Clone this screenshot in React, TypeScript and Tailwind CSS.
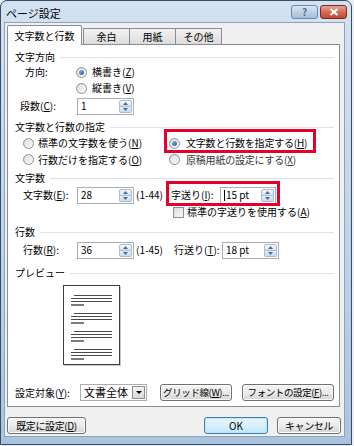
import React from 'react';

function Acc({ k }: { k: string }) {
  return (
    <span>
      (<u>{k}</u>)
    </span>
  );
}

function Radio({ on }: { on?: boolean }) {
  return (
    <span className="w-[11px] h-[11px] shrink-0 rounded-full border border-[#8e8f8f] bg-gradient-to-br from-[#dcdcdc] to-[#fbfbfb] flex items-center justify-center">
      {on && <span className="w-[5px] h-[5px] rounded-full bg-gradient-to-br from-[#7fb6ea] to-[#1f5ea8]" />}
    </span>
  );
}

function Arrow({ up }: { up?: boolean }) {
  return (
    <svg width="5" height="3" viewBox="0 0 5 3">
      <polygon points={up ? '0,3 5,3 2.5,0' : '0,0 5,0 2.5,3'} fill="#4a6a92" />
    </svg>
  );
}

function Spin({ v, className, cursor }: { v: string; className: string; cursor?: boolean }) {
  return (
    <div className={`h-[17px] border border-[#abadb3] bg-white flex ${className}`}>
      <div className="flex-1 flex items-center pl-[3px] text-[10px]">
        {cursor && <span className="w-px h-[11px] bg-black mr-px" />}
        {v}
      </div>
      <div className="w-[13px] flex flex-col m-px">
        <div className="flex-1 border border-[#a8bbd3] rounded-t-[2px] bg-gradient-to-b from-[#f4f8fc] to-[#d6e4f3] flex items-center justify-center">
          <Arrow up />
        </div>
        <div className="flex-1 border border-t-0 border-[#a8bbd3] rounded-b-[2px] bg-gradient-to-b from-[#e6eef8] to-[#c9dbef] flex items-center justify-center">
          <Arrow />
        </div>
      </div>
    </div>
  );
}

function Btn({ children, className }: { children: React.ReactNode; className: string }) {
  return (
    <div
      className={`h-[17px] rounded-[3px] border border-[#707070] bg-gradient-to-b from-[#f4f4f4] via-[#ebebeb] to-[#d5d5d5] flex items-center justify-center whitespace-nowrap tracking-[-0.4px] shadow-[inset_0_0_0_1px_#fcfcfc] ${className}`}
    >
      {children}
    </div>
  );
}

function Header({ title, className }: { title: string; className: string }) {
  return (
    <div className={`h-[14px] flex items-center pl-[7px] pr-[5px] ${className}`}>
      <span>{title}</span>
      <span className="flex-1 h-px bg-[#dce3ea] ml-[5px]" />
    </div>
  );
}

function Group() {
  return (
    <div className="flex flex-col gap-[2px]">
      <span className="ml-[3px] w-[38px] h-px bg-[#4a4a4a]" />
      <span className="w-[41px] h-px bg-[#4a4a4a]" />
      <span className="w-[41px] h-px bg-[#4a4a4a]" />
      <span className="w-[13px] h-[2px] bg-[#7c7c7c]" />
    </div>
  );
}

export default function App() {
  return (
    <div className="w-[354px] h-[446px] bg-[#e9eef4] font-['Noto_Sans_CJK_JP','Noto_Sans',sans-serif] text-[10px] leading-none text-black whitespace-nowrap">
      <div className="w-[352px] h-[445px] rounded-t-[7px] border border-[#3b4d63] bg-gradient-to-b from-[#d3e2f1] via-[#c0d5eb] to-[#aac4e0] flex flex-col">
        {/* title bar */}
        <div className="h-[21px] flex items-center pl-[5px] pr-[4px]">
          <span className="text-[11px] pt-[3px]">ページ設定</span>
          <div className="flex-1" />
          <div className="w-[27px] h-[14px] rounded-[3px] border border-[#6e88a8] bg-gradient-to-b from-[#dbe6f2] via-[#bcd0e6] to-[#a6bfdb] flex items-center justify-center text-[10px] font-bold text-[#5a6f8a]">
            ?
          </div>
          <div className="w-[27px] h-[14px] ml-[2px] rounded-[3px] border border-[#7a2a22] bg-gradient-to-b from-[#e8a593] via-[#d46a57] to-[#c4473a] flex items-center justify-center">
            <svg width="10" height="8" viewBox="0 0 10 8">
              <path d="M1.5 1 L8.5 7 M8.5 1 L1.5 7" stroke="#fff" strokeWidth="2.2" />
            </svg>
          </div>
        </div>

        {/* client area */}
        <div className="ml-[3px] w-[341px] h-[415px] bg-[#f0f0f0] border border-[#8da3bd] flex flex-col">
          {/* tabs */}
          <div className="h-[21px] flex items-end pl-[2px]">
            <div className="relative z-10 w-[75px] h-[20px] bg-white border border-b-0 border-[#898c95] rounded-t-[2px] flex items-center justify-center -mb-px">
              文字数と行数
            </div>
            <div className="w-[47px] h-[16px] ml-px border border-b-0 border-[#898c95] bg-gradient-to-b from-[#f3f3f3] to-[#dcdcdc] flex items-center justify-center">
              余白
            </div>
            <div className="w-[47px] h-[16px] -ml-px border border-b-0 border-[#898c95] bg-gradient-to-b from-[#f3f3f3] to-[#dcdcdc] flex items-center justify-center">
              用紙
            </div>
            <div className="w-[47px] h-[16px] -ml-px border border-b-0 border-[#898c95] bg-gradient-to-b from-[#f3f3f3] to-[#dcdcdc] flex items-center justify-center">
              その他
            </div>
          </div>

          {/* tab panel */}
          <div className="relative ml-[2px] w-[333px] h-[363px] bg-white border border-[#898c95] flex flex-col">
            <Header title="文字方向" className="mt-[5px]" />
            <div className="h-[16px] flex items-center">
              <span className="ml-[17px] w-[51px]">方向:</span>
              <Radio on />
              <span className="ml-[5px]">
                横書き<Acc k="Z" />
              </span>
            </div>
            <div className="h-[16px] flex items-center pl-[68px]">
              <Radio />
              <span className="ml-[5px]">
                縦書き<Acc k="V" />
              </span>
            </div>
            <div className="h-[18px] mt-px flex items-center">
              <span className="ml-[12px] w-[57px]">
                段数<Acc k="C" />:
              </span>
              <Spin v="1" className="w-[57px]" />
            </div>

            <Header title="文字数と行数の指定" className="mt-[5px]" />
            <div className="h-[16px] mt-px flex items-center">
              <div className="ml-[15px] w-[146px] flex items-center">
                <Radio />
                <span className="ml-[4px]">
                  標準の文字数を使う<Acc k="N" />
                </span>
              </div>
              <Radio on />
              <span className="ml-[6px] tracking-[-0.2px]">
                文字数と行数を指定する<Acc k="H" />
              </span>
            </div>
            <div className="h-[17px] flex items-center">
              <div className="ml-[15px] w-[146px] flex items-center">
                <Radio />
                <span className="ml-[4px]">
                  行数だけを指定する<Acc k="O" />
                </span>
              </div>
              <Radio />
              <span className="ml-[6px] text-[#333] tracking-[-0.2px]">
                原稿用紙の設定にする<Acc k="X" />
              </span>
            </div>

            <Header title="文字数" className="mt-[3px]" />
            <div className="h-[18px] mt-px flex items-center">
              <span className="ml-[15px] w-[54px]">
                文字数<Acc k="E" />:
              </span>
              <Spin v="28" className="w-[57px]" />
              <span className="ml-[2px] w-[35px]">(1-44)</span>
              <span className="w-[49px]">
                字送り<Acc k="I" />:
              </span>
              <Spin v="15 pt" cursor className="w-[56px]" />
            </div>
            <div className="h-[16px] flex items-center">
              <span className="ml-[165px] w-[11px] h-[11px] border border-[#8f8f8f] bg-gradient-to-br from-[#dcdcdc] to-[#fafafa]" />
              <span className="ml-[3px]">
                標準の字送りを使用する<Acc k="A" />
              </span>
            </div>

            <Header title="行数" className="mt-[5px]" />
            <div className="h-[18px] mt-[2px] flex items-center">
              <span className="ml-[15px] w-[54px]">
                行数<Acc k="R" />:
              </span>
              <Spin v="36" className="w-[57px]" />
              <span className="ml-[2px] w-[38px]">(1-45)</span>
              <span className="w-[48px]">
                行送り<Acc k="T" />:
              </span>
              <Spin v="18 pt" className="w-[57px]" />
            </div>

            <Header title="プレビュー" className="mt-[7px]" />
            <div className="mt-[5px] ml-[55px] w-[57px] h-[80px] border border-[#3f3f3f] bg-white shadow-[1px_1px_0_#c4c4c4] flex flex-col gap-[7px] pt-[9px] pl-[7px]">
              <Group />
              <Group />
              <Group />
              <Group />
            </div>

            <div className="h-[17px] mt-[19px] flex items-center">
              <span className="ml-[7px] w-[65px]">
                設定対象<Acc k="Y" />:
              </span>
              <div className="w-[67px] h-[17px] border border-[#abadb3] bg-white flex">
                <span className="flex-1 flex items-center pl-[3px] text-[11px]">文書全体</span>
                <span className="w-[13px] m-px border border-[#8e8f8f] bg-gradient-to-b from-[#f3f3f3] to-[#d9d9d9] flex items-center justify-center">
                  <svg width="6" height="3" viewBox="0 0 6 3">
                    <polygon points="0,0 6,0 3,3" fill="#000" />
                  </svg>
                </span>
              </div>
              <Btn className="ml-[13px] w-[72px] text-[9.5px]">
                グリッド線<Acc k="W" />...
              </Btn>
              <Btn className="ml-[10px] w-[92px] text-[9.5px]">
                フォントの設定<Acc k="F" />...
              </Btn>
            </div>

            {/* red annotation boxes */}
            <div className="absolute left-[156px] top-[84px] w-[152px] h-[24px] border-[3px] border-[#e4002b]" />
            <div className="absolute left-[158px] top-[136px] w-[114px] h-[25px] border-[3px] border-[#e4002b]" />
          </div>

          {/* bottom buttons */}
          <div className="mt-[10px] flex items-center pl-[2px]">
            <Btn className="w-[79px]">
              既定に設定<Acc k="D" />
            </Btn>
            <div className="flex-1" />
            <div className="w-[64px] h-[17px] rounded-[3px] border border-[#3c7fb1] bg-gradient-to-b from-[#eaf6fd] via-[#d9f0fc] to-[#bee6fd] flex items-center justify-center shadow-[inset_0_0_0_1px_#c5e5f9]">
              OK
            </div>
            <Btn className="ml-[9px] mr-[3px] w-[64px]">キャンセル</Btn>
          </div>
        </div>
      </div>
    </div>
  );
}
